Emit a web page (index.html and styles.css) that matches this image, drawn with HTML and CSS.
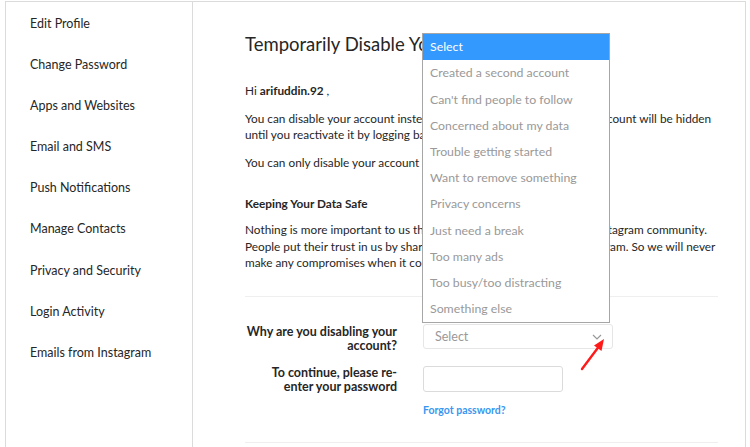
FILE: index.html
```html
<!DOCTYPE html>
<html lang="en">
<head>
  <meta charset="UTF-8" />
  <title>Temporarily Disable Your Account</title>
  <link rel="stylesheet" href="styles.css">
</head>
<body>
  <div class="settings">
    <ul class="side-nav">
      <li>Edit Profile</li>
      <li>Change Password</li>
      <li>Apps and Websites</li>
      <li>Email and SMS</li>
      <li>Push Notifications</li>
      <li>Manage Contacts</li>
      <li>Privacy and Security</li>
      <li>Login Activity</li>
      <li>Emails from Instagram</li>
    </ul>

    <main class="content">
      <h1 class="page-title">Temporarily Disable Your Account</h1>

      <p class="greet">Hi <strong>arifuddin.92</strong> ,</p>
      <p>You can disable your account instead of deleting it. This means your account will be hidden until you reactivate it by logging back in.</p>
      <p>You can only disable your account once a week.</p>

      <h2 class="sub-title">Keeping Your Data Safe</h2>
      <p>Nothing is more important to us than the safety and security of the Instagram community. People put their trust in us by sharing moments of their lives on Instagram. So we will never make any compromises when it comes to safeguarding your data.</p>

      <div class="form">
        <div class="form-row">
          <label class="form-label">Why are you disabling your account?</label>
          <div class="select-wrap">
            <ul class="options">
              <li class="active">Select</li>
              <li>Created a second account</li>
              <li>Can't find people to follow</li>
              <li>Concerned about my data</li>
              <li>Trouble getting started</li>
              <li>Want to remove something</li>
              <li>Privacy concerns</li>
              <li>Just need a break</li>
              <li>Too many ads</li>
              <li>Too busy/too distracting</li>
              <li>Something else</li>
            </ul>
            <div class="select-box">
              <span>Select</span>
              <svg class="chevron" width="10" height="6" viewBox="0 0 10 6"><path d="M1 1l4 4 4-4" fill="none" stroke="#999" stroke-width="1.2"/></svg>
            </div>
            <svg class="pointer" width="30" height="36" viewBox="0 0 30 36">
              <path d="M3 33L21 9" stroke="#ff1a1a" stroke-width="2.4" stroke-linecap="round"/>
              <path d="M25 3L15 9.5L22.5 15Z" fill="#ff1a1a"/>
            </svg>
          </div>
        </div>
        <div class="form-row">
          <label class="form-label">To continue, please re-enter your password</label>
          <div class="field">
            <input type="password" class="pass-input">
            <a class="forgot" href="#">Forgot password?</a>
          </div>
        </div>
      </div>
    </main>
  </div>
</body>
</html>
```

FILE: styles.css
```css
body {
  margin: 0;
  background-color: #fff;
  font-family: 'Lato', 'Open Sans', sans-serif;
  color: #262626;
  overflow: hidden;
}

.settings {
  margin: 1px 4px 0 5px;
  border: 1px solid #dbdbdb;
  display: flex;
  height: 460px;
}

.side-nav {
  list-style: none;
  margin: 0;
  padding: 0;
  width: 186px;
  border-right: 1px solid #dbdbdb;
  flex-shrink: 0;
}

.side-nav li {
  font-size: 12.5px;
  line-height: 17px;
  padding: 13px 0 11.1px 24px;
}

.content {
  flex: 1;
  padding: 30px 25px 0 52px;
  font-size: 11.8px;
  line-height: 16.5px;
}

.page-title {
  font-size: 18.5px;
  font-weight: 400;
  line-height: 24px;
  margin: 0 0 27px;
}

.content p {
  margin: 0 0 11px;
}

.content strong {
  font-weight: 700;
}

.sub-title {
  font-size: 11.8px;
  font-weight: 700;
  margin: 24.5px 0 10.75px;
  line-height: 16px;
}

.form {
  border-top: 1px solid #efefef;
  border-bottom: 1px solid #efefef;
  margin-top: 24.5px;
  margin-right: 2px;
  padding: 28px 0 25px;
}

.form-row {
  display: flex;
  align-items: flex-start;
  gap: 26px;
  margin-bottom: 13px;
}

.form-row:last-child {
  margin-bottom: 0;
}

.form-label {
  width: 152px;
  text-align: right;
  font-weight: 700;
  font-size: 12.5px;
  line-height: 14px;
}

.select-wrap {
  position: relative;
  margin-top: -1px;
}

.select-box {
  box-sizing: border-box;
  width: 190px;
  height: 25px;
  border: 1px solid #e6e6e6;
  border-radius: 3px;
  padding: 0 7px 0 11px;
  display: flex;
  align-items: center;
  justify-content: space-between;
  color: #999;
  font-size: 12.5px;
}

.chevron {
  margin-right: 3px;
}

.options {
  position: absolute;
  left: -1px;
  bottom: calc(100% + 1px);
  box-sizing: border-box;
  width: 188px;
  margin: 0;
  padding: 0;
  list-style: none;
  background: #fff;
  border: 1px solid #a6a6a6;
}

.options li {
  height: 26.2px;
  line-height: 26px;
  padding-left: 7px;
  color: #999;
  font-size: 12.3px;
  white-space: nowrap;
}

.options li.active {
  background: #3399ff;
  color: #fff;
}

.pointer {
  position: absolute;
  left: 156px;
  top: 12px;
}

.field {
  display: flex;
  flex-direction: column;
}

.pass-input {
  box-sizing: border-box;
  width: 140px;
  height: 26px;
  border: 1px solid #dbdbdb;
  border-radius: 3px;
  margin: 0;
}

.forgot {
  margin-top: 11px;
  line-height: 14px;
  color: #3897f0;
  font-size: 10.5px;
  font-weight: 700;
  text-decoration: none;
}
```
